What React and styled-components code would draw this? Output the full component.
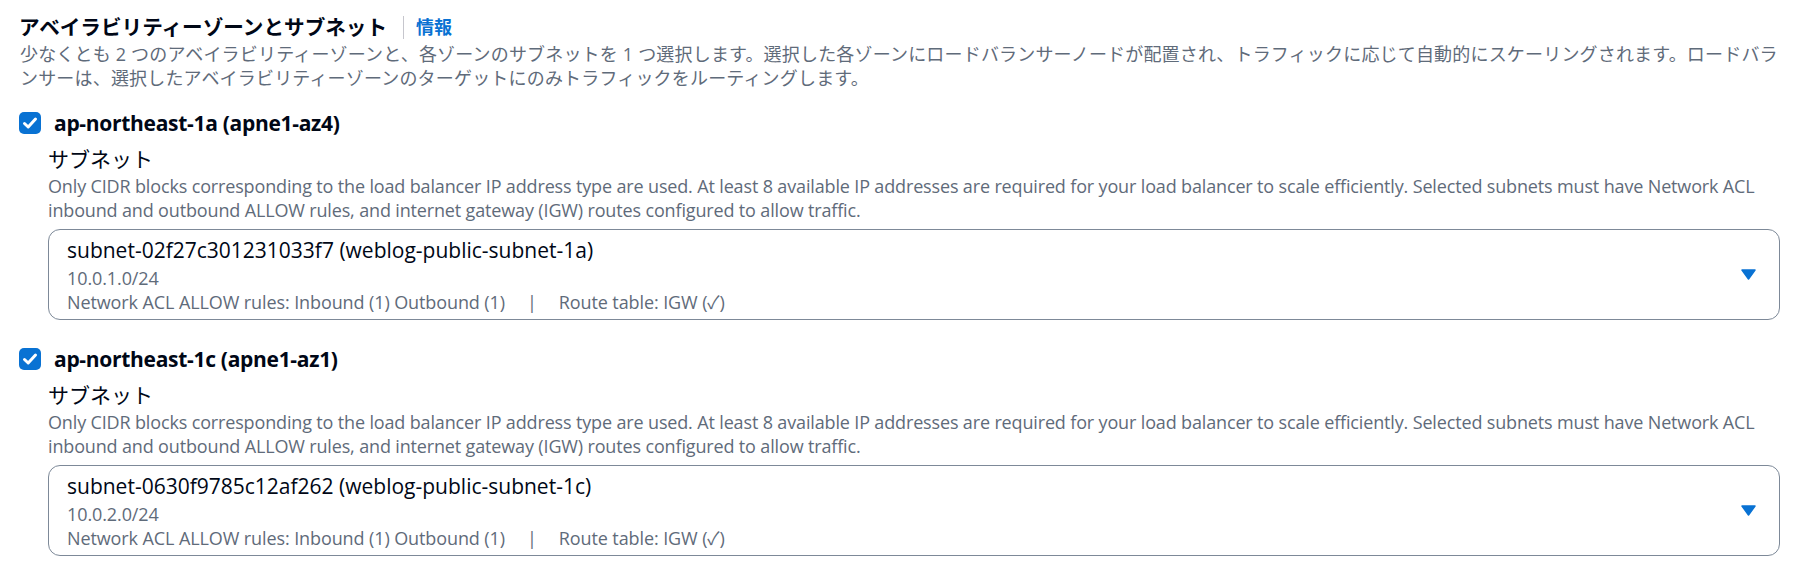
import styled, { createGlobalStyle } from "styled-components";

const GlobalStyle = createGlobalStyle`
  body {
    margin: 0;
    background: #ffffff;
    font-family: "Open Sans", "Noto Sans CJK JP", sans-serif;
    color: #000716;
  }
`;

const zones = [
  {
    name: "ap-northeast-1a (apne1-az4)",
    subnet: "subnet-02f27c301231033f7 (weblog-public-subnet-1a)",
    cidr: "10.0.1.0/24",
  },
  {
    name: "ap-northeast-1c (apne1-az1)",
    subnet: "subnet-0630f9785c12af262 (weblog-public-subnet-1c)",
    cidr: "10.0.2.0/24",
  },
];

export default function App() {
  return (
    <Page>
      <GlobalStyle />
      <Header>
        <Title>アベイラビリティーゾーンとサブネット</Title>
        <Divider />
        <InfoLink>情報</InfoLink>
      </Header>
      <Description>
        少なくとも 2 つのアベイラビリティーゾーンと、各ゾーンのサブネットを 1
        つ選択します。選択した各ゾーンにロードバランサーノードが配置され、トラフィックに応じて自動的にスケーリングされます。ロードバランサーは、選択したアベイラビリティーゾーンのターゲットにのみトラフィックをルーティングします。
      </Description>
      <ZoneList>
        {zones.map((zone) => (
          <Zone key={zone.name}>
            <CheckRow>
              <Checkbox>
                <svg width="22" height="22" viewBox="0 0 22 22">
                  <polyline
                    points="5.5,11.5 9.2,15 16.5,7"
                    fill="none"
                    stroke="#ffffff"
                    strokeWidth="3"
                    strokeLinecap="round"
                    strokeLinejoin="round"
                  />
                </svg>
              </Checkbox>
              <ZoneName>{zone.name}</ZoneName>
            </CheckRow>
            <ZoneBody>
              <FieldLabel>サブネット</FieldLabel>
              <FieldDesc>
                Only CIDR blocks corresponding to the load balancer IP address
                type are used. At least 8 available IP addresses are required
                for your load balancer to scale efficiently. Selected subnets
                must have Network ACL inbound and outbound ALLOW rules, and
                internet gateway (IGW) routes configured to allow traffic.
              </FieldDesc>
              <Select>
                <Option>
                  <OptionLabel>{zone.subnet}</OptionLabel>
                  <Tag>{zone.cidr}</Tag>
                  <Tag>
                    Network ACL ALLOW rules: Inbound (1) Outbound (1)
                    <Separator>|</Separator>
                    Route table: IGW (✓)
                  </Tag>
                </Option>
                <svg width="15" height="11" viewBox="0 0 15 11">
                  <path
                    d="M1 1 H14 L7.5 10 Z"
                    fill="#0972d3"
                    stroke="#0972d3"
                    strokeWidth="1.5"
                    strokeLinejoin="round"
                  />
                </svg>
              </Select>
            </ZoneBody>
          </Zone>
        ))}
      </ZoneList>
    </Page>
  );
}

const Page = styled.div`
  padding: 12px 29px 0 20px;
`;

const Header = styled.div`
  display: flex;
  align-items: center;
  height: 30px;
`;

const Title = styled.h2`
  margin: 0 0 0 -1px;
  font-size: 20.6px;
  font-weight: 700;
  line-height: 30px;
  color: #000716;
`;

const Divider = styled.span`
  width: 1px;
  height: 23px;
  background: #c6c6cd;
  margin: 0 12px 0 16px;
`;

const InfoLink = styled.a`
  font-size: 18px;
  font-weight: 700;
  line-height: 30px;
  color: #0972d3;
  cursor: pointer;
`;

const Description = styled.p`
  margin: 0;
  font-size: 18px;
  line-height: 24px;
  letter-spacing: 0.18px;
  color: #5f6b7a;
`;

const ZoneList = styled.div`
  display: flex;
  flex-direction: column;
  gap: 24px;
  margin-top: 18px;
`;

const Zone = styled.div``;

const CheckRow = styled.label`
  display: flex;
  align-items: center;
  gap: 13px;
  height: 30px;
`;

const Checkbox = styled.span`
  display: flex;
  width: 22px;
  height: 22px;
  margin-left: -1px;
  border-radius: 5px;
  background: #0972d3;
`;

const ZoneName = styled.span`
  font-size: 21px;
  font-weight: 700;
  line-height: 30px;
  letter-spacing: -0.3px;
`;

const ZoneBody = styled.div`
  padding-left: 28px;
  margin-top: 6px;
`;

const FieldLabel = styled.div`
  font-size: 21px;
  line-height: 30px;
`;

const FieldDesc = styled.div`
  font-size: 18px;
  line-height: 24px;
  letter-spacing: -0.15px;
  color: #5f6b7a;
`;

const Select = styled.div`
  display: flex;
  align-items: center;
  margin-top: 7px;
  padding: 4px 23px 5px 18px;
  border: 1px solid #7d8998;
  border-radius: 12px;
`;

const Option = styled.div`
  flex: 1;
  display: flex;
  flex-direction: column;
`;

const OptionLabel = styled.span`
  font-size: 21px;
  line-height: 32px;
`;

const Tag = styled.span`
  font-size: 18px;
  line-height: 24px;
  letter-spacing: -0.1px;
  color: #5f6b7a;
`;

const Separator = styled.span`
  margin: 0 22px;
`;
